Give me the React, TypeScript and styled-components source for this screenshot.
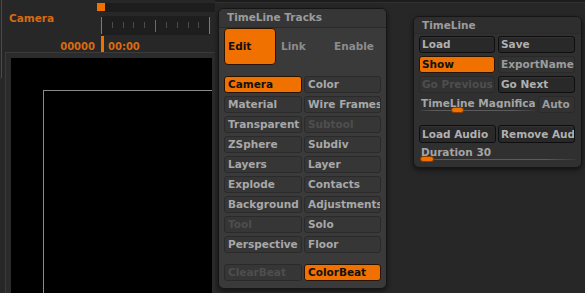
import React from "react";
import styled, { createGlobalStyle, css } from "styled-components";

const Global = createGlobalStyle`
  html, body { margin: 0; padding: 0; background: #272727; overflow: hidden; }
  body { font-family: "DejaVu Sans", "Liberation Sans", sans-serif; }
`;

const ORANGE = "#f07000";
const ORANGE_TEXT = "#d96a10";

const Page = styled.div`
  width: 585px;
  height: 293px;
  display: flex;
  background: #272727;
  overflow: hidden;
  font-family: "DejaVu Sans", "Liberation Sans", sans-serif;
  font-weight: bold;
  font-size: 10.5px;
`;

/* ---------- left viewport section ---------- */
const LeftSection = styled.div`
  width: 215px;
  height: 293px;
  display: flex;
  flex: none;
`;

const EdgeStrip = styled.div`
  width: 5px;
  flex: none;
`;

const EdgeLine = styled.div`
  width: 1px;
  height: 78px;
  border-right: 1px solid #4a4a4a;
  border-bottom: 1px solid #3a3a3a;
  border-bottom-right-radius: 3px;
`;

const Main = styled.div`
  width: 210px;
  display: flex;
  flex-direction: column;
`;

const TopArea = styled.div`
  height: 52px;
  display: grid;
  grid-template-columns: 96px 1fr;
  grid-template-rows: 3px 9px 4px 19px 1px 16px;
`;

const CameraLabel = styled.div`
  grid-column: 1;
  grid-row: 1 / 5;
  color: ${ORANGE_TEXT};
  padding: 12px 0 0 4px;
  line-height: 12px;
`;

const Track = styled.div`
  grid-column: 2;
  grid-row: 2;
  position: relative;
  margin-left: 3px;
  background: #1d1d1d;
`;

const TrackThumb = styled.div`
  position: absolute;
  left: -7px;
  top: 0;
  width: 8px;
  height: 8px;
  background: ${ORANGE};
`;

const Ruler = styled.div`
  grid-column: 2;
  grid-row: 4;
  margin-right: 5px;
  background: #1e1e1e;
  display: flex;
`;

const Counter = styled.div`
  grid-column: 1;
  grid-row: 6;
  text-align: right;
  padding: 5px 6px 0 0;
  line-height: 12px;
  font-size: 10px;
  color: ${ORANGE_TEXT};
`;

const TimeCell = styled.div`
  grid-column: 2;
  grid-row: 6;
  display: flex;
`;

const Marker = styled.div`
  width: 3px;
  background: ${ORANGE};
`;

const TimeText = styled.div`
  margin-left: 4px;
  padding-top: 5px;
  line-height: 12px;
  font-size: 10px;
  color: ${ORANGE_TEXT};
`;

const ViewFrame = styled.div`
  flex: 1;
  display: flex;
  border-top: 1px solid #3a3a3a;
  border-left: 1px solid #3a3a3a;
  background: #2b2b2b;
  padding: 5px 3px 0 5px;
`;

const Viewport = styled.div`
  flex: 1;
  display: flex;
  background: #000;
  padding: 32px 0 0 32px;
`;

const Guide = styled.div`
  flex: 1;
  border-top: 1px solid #8a8a8a;
  border-left: 1px solid #8a8a8a;
`;

/* ---------- right area with palettes ---------- */
const RightArea = styled.div`
  flex: 1;
  display: flex;
  flex-direction: column;
`;

const TopBand = styled.div`
  height: 2px;
  background: #1c1c1c;
  border-bottom: 1px solid #303030;
`;

const Palettes = styled.div`
  display: flex;
  align-items: flex-start;
  gap: 26px;
  padding-left: 3px;
  margin-top: 5px;
`;

const Panel = styled.div<{ $tone: "mid" | "dark"; $top?: number }>`
  box-sizing: border-box;
  border: 1px solid #161616;
  border-radius: 6px;
  box-shadow: 0 2px 5px rgba(0, 0, 0, 0.55), inset 0 1px 0 rgba(255, 255, 255, 0.05);
  background: ${(p) => (p.$tone === "mid" ? "#3a3a3a" : "#303030")};
  margin-top: ${(p) => p.$top ?? 0}px;
  overflow: hidden;
`;

const MidPanel = styled(Panel)`
  width: 169px;
`;

const TimePanel = styled(Panel)`
  width: 169px;
`;

const PanelHeader = styled.div<{ $tall?: boolean }>`
  line-height: 16px;
  padding: 0 0 ${(p) => (p.$tall ? 2 : 0)}px 8px;
  color: #9c9c9c;
  border-bottom: 1px solid #2a2a2a;
  background: ${(p) => (p.$tall ? "#363636" : "#2e2e2e")};
`;

const MidBody = styled.div`
  padding: 0 5px 7px 5px;
`;

const TabRow = styled.div`
  display: grid;
  grid-template-columns: 52px 52px 1fr;
  column-gap: 1px;
  height: 37px;
`;

const Tab = styled.div<{ $on?: boolean }>`
  box-sizing: border-box;
  line-height: 35px;
  padding-left: 3px;
  border-radius: 4px;
  border: 1px solid ${(p) => (p.$on ? "#2a1200" : "transparent")};
  background: ${(p) => (p.$on ? ORANGE : "transparent")};
  color: ${(p) => (p.$on ? "#111" : "#8c8c8c")};
`;

const BtnGrid = styled.div<{ $cols: string; $gap: number; $top: number }>`
  display: grid;
  grid-template-columns: ${(p) => p.$cols};
  column-gap: ${(p) => p.$gap}px;
  row-gap: 3px;
  margin-top: ${(p) => p.$top}px;
`;

type Variant = "mid" | "on" | "dark" | "soft";

const variantStyles: Record<Variant, ReturnType<typeof css>> = {
  mid: css`
    background: #363636;
    border-color: #2a2a2a;
    color: #a8a8a8;
  `,
  on: css`
    background: ${ORANGE};
    border-color: #2a1200;
    color: #111;
  `,
  dark: css`
    background: #292929;
    border-color: #0e0e0e;
    color: #b0b0b0;
    box-shadow: inset 0 1px 0 rgba(255, 255, 255, 0.05);
  `,
  soft: css`
    background: #323232;
    border-color: #292929;
    color: #9c9c9c;
  `,
};

const Btn = styled.div<{ $v: Variant; $off?: boolean; $h?: number; $pad?: number }>`
  box-sizing: border-box;
  height: ${(p) => p.$h ?? 17}px;
  line-height: ${(p) => (p.$h ?? 17) - 2}px;
  border: 1px solid;
  border-radius: 3px;
  padding-left: ${(p) => p.$pad ?? 3}px;
  white-space: nowrap;
  overflow: hidden;
  ${(p) => variantStyles[p.$v]}
  ${(p) =>
    p.$off &&
    css`
      color: #4e4e4e;
    `}
`;

const TimeBody = styled.div`
  padding: 2px 5px 4px 5px;
`;

const MagRow = styled.div`
  display: grid;
  grid-template-columns: 116px 37px;
  column-gap: 3px;
  margin-top: 3px;
`;

const SliderBlock = styled.div<{ $top?: number }>`
  display: flex;
  flex-direction: column;
  margin-top: ${(p) => p.$top ?? 0}px;
  overflow: hidden;
`;

const SliderLabel = styled.div`
  line-height: 10px;
  padding: 2px 0 0 2px;
  color: #a4a4a4;
  white-space: nowrap;
  overflow: hidden;
`;

const SliderTrack = styled.div`
  position: relative;
  height: 7px;
  margin-top: -1px;
  &::before {
    content: "";
    position: absolute;
    left: 1px;
    right: 0;
    top: 3px;
    height: 1px;
    background: linear-gradient(90deg, #3a3a3a, #5c5c5c 12%, #5c5c5c 80%, #383838);
  }
`;

const SliderThumb = styled.div<{ $w: number }>`
  position: absolute;
  top: 0;
  width: ${(p) => p.$w}px;
  height: 6px;
  box-sizing: border-box;
  border-radius: 3px;
  border: 1px solid #8a3c00;
  background: ${ORANGE};
`;

const RulerSvg = () => {
  const short = [11, 22, 32, 43, 65, 76, 87, 97];
  return (
    <svg width="109" height="19" viewBox="0 0 109 19">
      <rect x="0" y="1" width="1" height="17" fill="#7a7a7a" />
      <rect x="108" y="1" width="1" height="17" fill="#7a7a7a" />
      <rect x="54" y="4" width="1" height="12" fill="#6a6a6a" />
      {short.map((x) => (
        <rect key={x} x={x} y="6" width="1" height="6" fill="#4a4a4a" />
      ))}
    </svg>
  );
};

const trackItems: { text: string; v?: Variant; off?: boolean }[] = [
  { text: "Camera", v: "on" },
  { text: "Color" },
  { text: "Material" },
  { text: "Wire Frames" },
  { text: "Transparent" },
  { text: "Subtool", off: true },
  { text: "ZSphere" },
  { text: "Subdiv" },
  { text: "Layers" },
  { text: "Layer" },
  { text: "Explode" },
  { text: "Contacts" },
  { text: "Background" },
  { text: "Adjustments" },
  { text: "Tool", off: true },
  { text: "Solo" },
  { text: "Perspective" },
  { text: "Floor" },
];

export default function App() {
  return (
    <Page>
      <Global />
      <LeftSection>
        <EdgeStrip>
          <EdgeLine />
        </EdgeStrip>
        <Main>
          <TopArea>
            <CameraLabel>Camera</CameraLabel>
            <Track>
              <TrackThumb />
            </Track>
            <Ruler>
              <RulerSvg />
            </Ruler>
            <Counter>00000</Counter>
            <TimeCell>
              <Marker />
              <TimeText>00:00</TimeText>
            </TimeCell>
          </TopArea>
          <ViewFrame>
            <Viewport>
              <Guide />
            </Viewport>
          </ViewFrame>
        </Main>
      </LeftSection>

      <RightArea>
        <TopBand />
        <Palettes>
          <MidPanel $tone="mid">
            <PanelHeader $tall>TimeLine Tracks</PanelHeader>
            <MidBody>
              <TabRow>
                <Tab $on>Edit</Tab>
                <Tab>Link</Tab>
                <Tab>Enable</Tab>
              </TabRow>
              <BtnGrid $cols="78px 77px" $gap={2} $top={11}>
                {trackItems.map((it) => (
                  <Btn key={it.text} $v={it.v ?? "mid"} $off={it.off}>
                    {it.text}
                  </Btn>
                ))}
              </BtnGrid>
              <BtnGrid $cols="78px 77px" $gap={2} $top={11}>
                <Btn $v="mid" $off>
                  ClearBeat
                </Btn>
                <Btn $v="on">ColorBeat</Btn>
              </BtnGrid>
            </MidBody>
          </MidPanel>

          <TimePanel $tone="dark" $top={8}>
            <PanelHeader>TimeLine</PanelHeader>
            <TimeBody>
              <BtnGrid $cols="76px 77px" $gap={3} $top={0}>
                <Btn $v="dark" $pad={2}>Load</Btn>
                <Btn $v="dark" $pad={2}>Save</Btn>
                <Btn $v="on" $pad={2}>Show</Btn>
                <Btn $v="soft" $pad={2}>ExportName</Btn>
                <Btn $v="soft" $pad={2} $off>Go Previous</Btn>
                <Btn $v="dark" $pad={2}>Go Next</Btn>
              </BtnGrid>
              <MagRow>
                <SliderBlock>
                  <SliderLabel>TimeLine Magnification</SliderLabel>
                  <SliderTrack>
                    <SliderThumb $w={13} style={{ left: 32 }} />
                  </SliderTrack>
                </SliderBlock>
                <Btn $v="soft" $pad={3}>Auto</Btn>
              </MagRow>
              <BtnGrid $cols="77px 77px" $gap={2} $top={11}>
                <Btn $v="dark" $h={18} $pad={2}>Load Audio</Btn>
                <Btn $v="dark" $h={18} $pad={2}>Remove Audio</Btn>
              </BtnGrid>
              <SliderBlock $top={2}>
                <SliderLabel>Duration 30</SliderLabel>
                <SliderTrack>
                  <SliderThumb $w={14} style={{ left: 1 }} />
                </SliderTrack>
              </SliderBlock>
            </TimeBody>
          </TimePanel>
        </Palettes>
      </RightArea>
    </Page>
  );
}
